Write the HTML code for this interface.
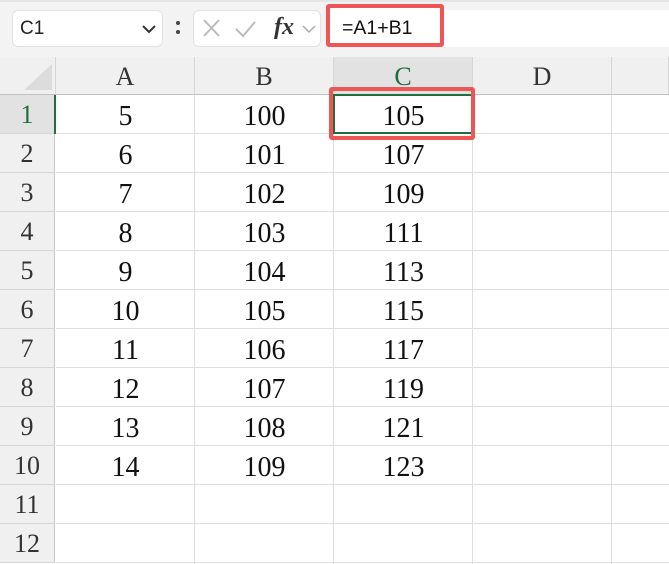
<!DOCTYPE html>
<html><head><style>
body{margin:0;width:669px;height:564px;overflow:hidden;background:#fff;position:relative;font-family:"Liberation Serif",serif}
div{position:absolute;box-sizing:border-box}
.t{font-family:"Liberation Sans",sans-serif}
.cell{font-size:28px;text-align:center;line-height:39px;color:#111}
.rh{left:0;width:55px;height:39px;background:#f0f0f0;font-size:26px;text-align:center;line-height:39px;color:#333;border-bottom:1px solid #d6d6d6;border-right:1px solid #c8c8c8}
.ch{top:57px;height:38px;background:#f0f0f0;font-size:26px;text-align:center;line-height:40px;color:#333;border-right:1px solid #d6d6d6;border-bottom:1px solid #c0c0c0}
</style></head><body>
<div style="left:0;top:0;width:669px;height:57px;background:#f3f3f3;border-top:2px solid #e6e6e6"></div>
<div class="t" style="left:12px;top:10px;width:151px;height:37px;background:#fff;border:1px solid #e2e2e2;border-radius:6px;font-size:19px;line-height:35px;padding-left:7px;color:#222">C1</div>
<svg style="position:absolute;left:141px;top:24px" width="16" height="10"><path d="M2 2 L8 8 L14 2" fill="none" stroke="#333" stroke-width="2"/></svg>
<div style="left:176px;top:21px;width:4px;height:4px;background:#444;border-radius:2px"></div>
<div style="left:176px;top:30px;width:4px;height:4px;background:#444;border-radius:2px"></div>
<div style="left:193px;top:10px;width:128px;height:37px;background:#fff;border:1px solid #e2e2e2;border-radius:6px"></div>
<svg style="position:absolute;left:193px;top:10px" width="128" height="37"><path d="M11 10 L26 26 M26 10 L11 26" stroke="#bbb" stroke-width="2"/><path d="M43 19 L50 26 L62 12" fill="none" stroke="#bbb" stroke-width="2"/><path d="M110 16 L116 22 L122 16" fill="none" stroke="#aaa" stroke-width="1.5"/></svg>
<div style="left:274px;top:12px;font-size:24px;font-style:italic;font-weight:bold;color:#333;line-height:30px">fx</div>
<div style="left:326px;top:4px;width:118px;height:43px;border:4px solid #f05555;border-radius:3px;background:#fff"></div>
<div style="left:444px;top:10px;width:225px;height:37px;background:#fff"></div>
<div class="t" style="left:342px;top:14px;font-size:19.5px;line-height:28px;color:#111">=A1+B1</div>
<div style="left:0;top:57px;width:56px;height:38px;background:#f0f0f0;border-right:1px solid #d6d6d6;border-bottom:1px solid #c0c0c0"></div>
<svg style="position:absolute;left:20px;top:62px" width="34" height="30"><path d="M32 2 L32 28 L4 28 Z" fill="#dcdcdc"/></svg>
<div class="ch" style="left:56px;width:139px">A</div>
<div class="ch" style="left:195px;width:139px">B</div>
<div class="ch" style="left:334px;width:139px;background:#e2e2e2;color:#1e6e3e">C</div>
<div class="ch" style="left:473px;width:139px">D</div>
<div class="ch" style="left:612px;width:57px"></div>
<svg style="position:absolute;left:0;top:0" width="669" height="564">
<g stroke="#dedede" stroke-width="1">
<path d="M194.5 95V564M333.5 95V564M472.5 95V564M611.5 95V564"/>
<path d="M56 133.5H669M56 172.5H669M56 211.5H669M56 250.5H669M56 289.5H669M56 328.5H669M56 367.5H669M56 406.5H669M56 445.5H669M56 484.5H669M56 523.5H669M56 562.5H669"/>
</g></svg>
<div class="rh" style="top:95px;background:#e2e2e2;color:#1e6e3e">1</div>
<div style="left:54px;top:95px;width:2px;height:39px;background:#1e6e3e"></div>
<div class="rh" style="top:134px">2</div><div class="rh" style="top:173px">3</div><div class="rh" style="top:212px">4</div><div class="rh" style="top:251px">5</div><div class="rh" style="top:290px">6</div><div class="rh" style="top:329px">7</div><div class="rh" style="top:368px">8</div><div class="rh" style="top:407px">9</div><div class="rh" style="top:446px">10</div><div class="rh" style="top:485px">11</div><div class="rh" style="top:524px">12</div>
<div style="left:333px;top:94px;width:140px;height:40px;border:2px solid #1e6e3e"></div>
<div style="left:329px;top:87px;width:146px;height:53px;border:4px solid #f05555;border-radius:3px"></div>
<div class="cell" style="left:56px;top:97px;width:139px">5<br>6<br>7<br>8<br>9<br>10<br>11<br>12<br>13<br>14</div>
<div class="cell" style="left:195px;top:97px;width:139px">100<br>101<br>102<br>103<br>104<br>105<br>106<br>107<br>108<br>109</div>
<div class="cell" style="left:334px;top:97px;width:139px">105<br>107<br>109<br>111<br>113<br>115<br>117<br>119<br>121<br>123</div>
</body></html>
